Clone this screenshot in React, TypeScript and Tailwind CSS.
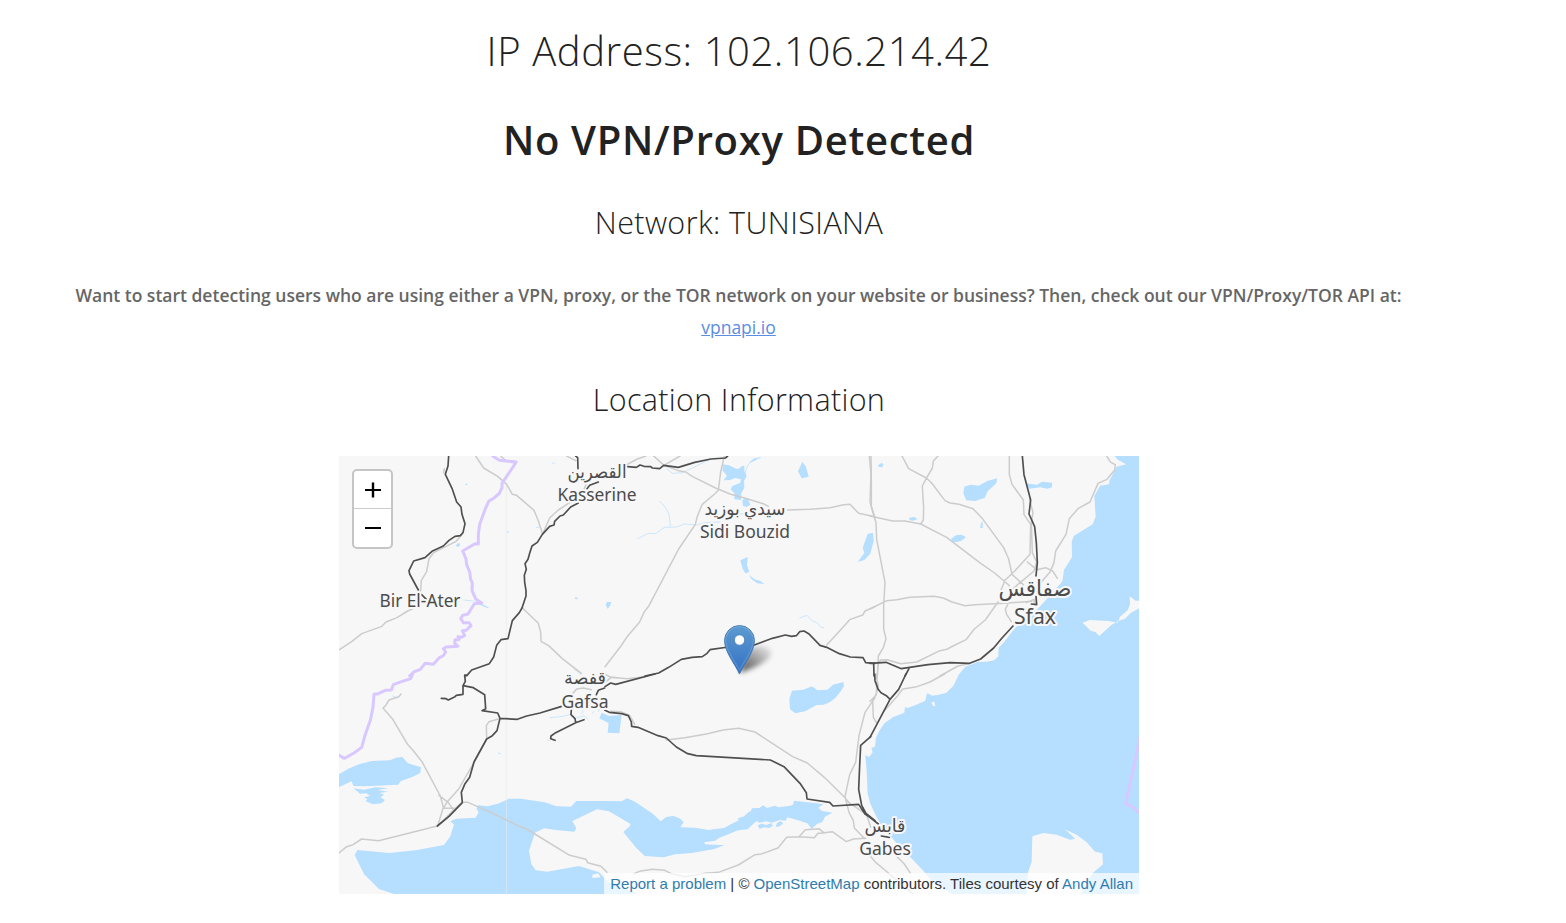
import React from "react";

// Map geometry is stored in six sections, at three units per pixel.
type Section = { x: number; y: number; water?: string; land?: string; streams?: string; roads: string; rails: string; border?: string };

const sections: Section[] = [
  {
    x: 0,
    y: 0,
    water: "M354 263l8-2 1 8-7 4-5-4zM379 83l6 1 0 3-6 0zM505 226l5 1-1 4-4-1zM708 424l8 1-1 5-7-1zM405 436l14 3 31 16-3 2-32-14z",
    streams: "M374 432l28 3M706 640l20 14M592 214l8 0M640 21l6 1",
    roads:
      "M410 0L434 36 476 61 503 85 520 115 533 118 585 163 597 192 611 234M611 234L632 186 658 162 692 140 735 100 748 70M485 0L500 14 528 16M316 38L314 50M0 582L39 556 68 533 127 512 141 498 174 485 206 465 222 458M243 425L247 373 263 347 270 308 284 290 350 257 366 239M550 455L566 471 598 502 605 528 606 556 629 569 670 608 727 652M683 0L710 14",
    rails:
      "M329 0L327 30 319 55 339 97 353 138 366 153 369 175 378 203 372 230 364 239 348 241 330 253 313 270 279 286 258 305 224 315 210 344 212 354 238 402M248 416L262 430 246 438M710 0L716 5 717 38M778 78L752 88 744 98M718 141L695 153 673 177 663 180 647 196 645 207 632 211 610 235 595 259 579 270 572 292 567 310 558 323 562 340 556 358 557 379 561 404 561 420 549 456 541 470 520 494 507 548 486 551 473 568 464 603 451 623 398 642 384 658 377 660",
    border:
      "M461 0L481 13 509 16 524 18 532 18 489 82 489 95 481 112 465 126 449 136 438 161 422 205 418 236 418 264 408 263 371 285 381 309 383 326 392 348 395 370 400 381 399 403 410 429 428 441 406 443 387 474 371 478 365 488 373 500 390 500 396 509 381 523 370 524 377 539 366 544 357 542 360 551 348 551 347 562 357 571 321 573 313 578 320 588 312 600 301 605 283 625 258 622 244 640 224 648 212 660",
  },
  {
    x: 798,
    y: 0,
    water:
      "M354 25L372 28 393 38 402 38 412 29 418 30 418 45 425 60 417 75 418 95 409 112 408 132 388 130 388 112 377 100 382 90 405 81 408 70 390 66 375 72 356 73 366 59 352 43ZM412 132l16-7 8 21-11 7-11-4ZM592 17L603 32 611 62 590 67 579 46ZM406 313L428 303 426 328 433 348 421 352 413 338ZM432 356L448 370 466 375 478 384 457 382 440 370ZM788 234L804 230 806 255 796 293 778 312 758 318 778 291 773 275ZM6 438l13 0-4 11-7 10-6-13ZM445 8l22-4-18 10-18 8z",
    streams:
      "M420 60L424 38 432 22 447 10 467 5M98 248L130 232 152 233 178 214 214 213 238 204 275 207 300 200 346 198M164 136L180 153 192 174 196 210M185 38L202 52 232 50 260 37 314 10M584 486L606 478 622 495 636 500 648 514 657 515M400 176l14-3",
    roads:
      "M67 25L97 9 123 0M146 0L177 28 220 44 242 48 263 62 332 96 375 114 426 128 475 143 490 151M177 28L225 0M358 0L347 48 340 103 329 114 291 146 276 184 271 205 221 279 132 449 118 467 104 498 65 544 48 570 0 632M548 162L616 160 676 155 716 146 735 145 761 172 810 182M793 0L798 53 795 138 810 186M810 452L780 465 773 477 734 491 701 528 665 567",
    rails:
      "M68 32L94 34 105 27 117 31 137 32 142 36 164 38 176 28 220 34 269 19 318 9 361 6 368 0M120 660L161 651 191 634 229 610 261 604 292 602 305 593 315 581 370 573 446 568 502 547 541 537 560 541 574 539 584 527 597 525 611 533 645 568 665 574 703 593 736 603 774 605 782 620 810 622",
  },
  {
    x: 1593,
    y: 0,
    water:
      "M734 0L743 11 768 25 740 32 719 72 717 85 690 89 673 120 677 182 668 205 640 222 612 239 605 257 606 303 593 325 582 341 577 376 553 404 525 435 500 462 470 487 435 516 403 557 386 575 385 601 372 613 350 617 323 618 285 633 266 656 250 690 228 711 188 719 171 712 166 734 139 746 113 756 105 753 103 770 70 783 44 801 28 824 18 845 15 872 4 876 8 889-2 903-14 898-10 944-7 1013 0 1041 18 1080 50 1134 65 1144 85 1169 120 1202 160 1244 180 1269 245 1314 810 1314 810 0ZM283 92L302 86 326 89 352 75 382 67 379 82 353 106 344 126 315 135 289 133 280 112ZM466 82L500 86 517 77 546 80 546 94 532 98 511 94 478 98ZM244 248L258 238 275 236 288 244 273 255 256 259 244 256ZM118 185l15-2 10 6-14 5-11-2ZM25 27l10-6 5 3-3 10-12-2ZM332 204l6-8 0 20-7 0ZM0 236l8-3 2 22-10 30Z",
    land: "M638 500L660 492 715 495 743 500 750 482 773 463 780 444 779 421 797 434 815 434 815 452 782 471 765 488 743 496 724 507 711 519 688 540 676 528 662 524ZM184 740l8-4 4 13-6 2ZM195 712l20-8 4 8-18 6ZM487 1141L520 1131 560 1136 600 1151 615 1149 605 1138 584 1120 620 1136 650 1159 675 1187 697 1192 699 1225 671 1249 650 1279 632 1314 470 1314 474 1249 485 1217Z",
    streams: "M3 232l-1 16",
    roads:
      "M3 0L4 80 4 153 18 200 20 250 45 379 41 449 41 520 48 548 40 575 25 600 22 660M96 0L116 38 169 66 185 81 225 134 240 141 267 145 309 158 335 185 401 275 416 309 426 355 460 386M204 0L190 15 187 36 169 67 157 90 161 155 160 192 152 204M0 180L68 195 105 195 152 204 230 244 332 322 374 351 418 389M418 0L418 56 426 85 460 132 462 176 482 205 480 295 434 345 405 373 393 402M479 130L489 170 484 200 487 290 500 318 492 345 430 397M472 318L500 341 527 335 548 345 562 367M710 0L722 19 736 26 734 42 711 70 684 82 660 138 625 157 598 188 588 235 557 285 552 320 540 348 514 378M0 459L50 434 80 431 120 424 192 421 220 426 246 438 285 449 314 446 403 442 485 436M384 438L346 492 313 519 288 551 243 573 231 580 210 584 140 618 92 623 52 611 31 612 25 625 22 660M413 446L406 460 410 475 424 497M296 623L264 630 210 660M470 440L492 430 494 445",
    rails:
      "M457 0L462 56 482 132 477 174 494 212 499 260 502 320 498 360M498 422L500 446 484 444M429 510L396 546 371 576 332 609 299 622 240 620 174 626 94 638 48 619 0 622M11 622L12 660M117 638L105 660",
  },
  {
    x: 0,
    y: 654,
    water:
      "M0 301L28 284 60 271 98 261 153 259 171 251 190 249 207 268 246 280 244 297 218 310 186 321 177 332 78 337 43 336 38 322 20 330 0 339ZM44 343l31 4 34-7 40 3-34 5 33 5-27 4 15 5-12 8 14 8-10 10-26 3-22-9 5-7-10-5 18-4-10-8-20 1z M418 394L445 397 477 389 510 374 545 374 617 385 652 397 696 398 712 381 810 381 848 382 864 373 888 383 942 420 965 442 982 429 1004 426 1024 434 1034 445 1024 460 1068 461 1110 468 1128 465 1155 462 1177 450 1200 439 1195 434 1218 424 1232 412 1240 403 1262 402 1272 394 1284 402 1308 395 1318 400 1350 396 1362 392 1365 380 1398 384 1453 390 1438 402 1450 411 1480 416 1458 428 1450 444 1434 450 1418 464 1405 448 1375 438 1345 430 1340 440 1322 438 1300 446 1280 442 1262 446 1252 442 1240 452 1226 466 1205 468 1192 470 1170 480 1140 492 1128 500 1096 505 1098 511 1156 514 1126 525 1059 537 1008 541 974 550 917 546 890 520 853 474 872 457 875 450 810 412 774 406 700 441 712 463 706 473 650 468 615 463 588 476 570 530 577 570 590 589 625 593 720 576 780 595 810 626 900 660 165 660 120 645 75 600 47 543 55 528 150 537 230 529 315 513 333 488 345 452 334 442 352 434 410 431 419 415 412 404ZM788 116l22 10 38-3-7 55-35-2 3-28-28-15ZM1256 454l12-5 14 4 14-6 6 9-12 6-16-2-12 5ZM1314 447l12-6 6 8-10 8-12 2Z",
    streams: "M633 131L673 127 695 120M706 134L735 125 747 135M160 66l12 3M478 237l7 2M625 198l6 1M728 118l4-8M778 112l3-6M760 118l5-6",
    roads:
      "M186 60L180 68 150 78 140 95 132 102 160 134 205 210 223 230 249 263 304 366 313 400 297 453M300 364L328 386 343 407M478 135L450 143 442 155 443 195 405 265 359 345 325 383 313 403 348 403M0 537L23 518 42 512 68 495 119 500 295 456 342 410 369 385 387 385 455 415 537 455 568 468 692 544 741 556 746 566 786 577 804 595M700 60L713 45 733 42 757 47M795 0L817 10 834 11",
    rails:
      "M384 4L377 3 379 22 372 35 372 61 352 64 348 68 328 78 321 74 307 73M372 35L403 41 437 62 440 104 429 110 476 117 483 133 535 136 563 126 603 117 668 97M483 133L474 170 460 185 443 195 405 264 392 310 377 331 367 355 370 386 330 427 295 456M772 62L778 49 797 42M697 106L696 122 708 134 710 145M735 137L710 146 650 176 636 186 635 194 648 199",
    border: "M221 0L215 14 181 25 163 32 157 48 139 49 118 59 105 61 102 100 94 139 77 187 68 220 45 237 16 253 0 244",
  },
  {
    x: 798,
    y: 654,
    water:
      "M553 75L561 50 595 47 621 37 637 49 668 47 684 32 715 24 717 37 706 53 690 73 674 85 656 92 635 93 600 112 571 118 555 106Z",
    land: "M402 424l14-5 4 7-12 4ZM425 407l12-3 2 7-12 3ZM-38 602l17-4 8 12-25 2Z",
    roads:
      "M0 25L19 10 67 14 120 8M17 112L47 113 74 124 89 151M183 198L240 191 308 179 354 168 401 163 450 174 563 248 607 267 658 310 718 369 732 386 785 422 797 460M810 71L780 115 762 185 752 265 734 302 720 368 732 415 745 440 748 462 779 494M85 600L103 592 142 586 179 589 199 599 240 608 300 598 340 595 400 573 450 542 469 540 519 522 545 490 582 488 601 467 642 464 656 476 682 473 724 503 745 495 782 493M582 488L628 491 639 478 660 477",
    rails:
      "M0 38L17 27 32 31 150 0M0 109L13 115 50 119 70 125 79 144 80 157 99 160 159 185 184 192 214 219 248 239 274 245 496 258 537 278 585 328 604 356 606 375 674 385 684 396 761 391 780 420 810 440M797 188L767 214 764 274 761 346 770 394 783 418 810 440",
  },
  {
    x: 1593,
    y: 654,
    roads: "M22 0L19 59 8 80 10 130 19 145M0 82L18 64 25 35 17 0M224 0L180 24 141 38 98 45 83 65 42 112M0 545L18 566 48 591 70 610 130 660M78 545L103 570 122 599",
    rails: "M14 0L15 20 24 45 33 56 49 65 60 76 0 190M108 0L86 46 60 76M0 430L25 450M34 486L58 490",
    border: "M810 190L798 248 767 389 792 402 810 418",
  },
];

const Layer = ({ pick, className }: { pick: (s: Section) => string | undefined; className: string }) => (
  <g className={className}>
    {sections.map((s, i) => {
      const d = pick(s);
      return d ? <path key={i} d={d} transform={`translate(${s.x} ${s.y})`} /> : null;
    })}
  </g>
);

type Place = { ar?: string; name: string; x: number; arY?: number; y: number; width: number; arWidth?: number; size: string };

const places: Place[] = [
  { ar: "القصرين", name: "Kasserine", x: 258, arY: 21.5, y: 45, width: 79, arWidth: 59, size: "text-[18px]" },
  { ar: "سيدي بوزيد", name: "Sidi Bouzid", x: 406, arY: 58.5, y: 82, width: 90, arWidth: 81, size: "text-[18px]" },
  { name: "Bir El-Ater", x: 81, y: 150.5, width: 81, size: "text-[18px]" },
  { ar: "قفصة", name: "Gafsa", x: 246, arY: 228, y: 251.5, width: 47, arWidth: 42, size: "text-[18px]" },
  { ar: "صفاقس", name: "Sfax", x: 696, arY: 140, y: 168, width: 42, arWidth: 73, size: "text-[22px]" },
  { ar: "قابس", name: "Gabes", x: 546, arY: 375.5, y: 398.5, width: 51.5, arWidth: 41, size: "text-[18px]" },
];

function MapCanvas() {
  return (
    <svg className="block h-[438px] w-[800px]" viewBox="0 0 800 438">
      <defs>
        <linearGradient id="pin" x1="0" y1="0" x2="0" y2="1">
          <stop offset="0" stopColor="#5c9bd0" />
          <stop offset="1" stopColor="#3470c4" />
        </linearGradient>
        <filter id="shade" x="-40%" y="-40%" width="180%" height="180%">
          <feGaussianBlur stdDeviation="2.8" />
        </filter>
        <linearGradient id="shadow" x1="0" y1="1" x2="1" y2="0">
          <stop offset="0" stopColor="#000" stopOpacity=".7" />
          <stop offset="1" stopColor="#000" stopOpacity=".02" />
        </linearGradient>
      </defs>
      <rect width="800" height="438" fill="#f7f7f7" />
      <g transform="scale(.333333)" strokeLinecap="round" strokeLinejoin="round">
        <Layer pick={(s) => s.water} className="fill-[#b5deff]" />
        <Layer pick={(s) => s.land} className="fill-[#f7f7f7]" />
        <Layer pick={(s) => s.streams} className="fill-none stroke-[#b5deff] stroke-2" />
        <path d="M502 85V1314" className="fill-none stroke-[#eaebec] stroke-2" />
        <Layer pick={(s) => s.roads} className="fill-none stroke-[#cccccc] stroke-[4.5px]" />
        <Layer pick={(s) => s.border} className="fill-none stroke-[#d9c8ff] stroke-[9px]" />
        <Layer pick={(s) => s.rails} className="fill-none stroke-[#4f4f4f] stroke-[5px]" />
      </g>
      {places.map((p) => (
        <g
          key={p.name}
          textAnchor="middle"
          paintOrder="stroke"
          className={`fill-[#4c4c4c] stroke-[#f7f7f7] stroke-[4px] font-['Noto_Sans','DejaVu_Sans',sans-serif] ${p.size}`}
          strokeLinejoin="round"
        >
          {p.ar && (
            <text x={p.x} y={p.arY} textLength={p.arWidth} lengthAdjust="spacingAndGlyphs">
              {p.ar}
            </text>
          )}
          <text x={p.x} y={p.y} textLength={p.width} lengthAdjust="spacingAndGlyphs">
            {p.name}
          </text>
        </g>
      ))}
      <path d="M401 217C404 208 405 199 412 193C422 187 435 191 432 199C427 208 411 213 401 217Z" fill="url(#shadow)" filter="url(#shade)" />
      <path d="M400.5 218C396 208 385.500 196 385.500 184.500a15 15 0 0 1 30 0C415.500 196 405 208 400.500 218Z" fill="url(#pin)" stroke="#3a74ae" strokeWidth=".8" />
      <path d="M400.5 214C396 205 386.700 195 386.700 184.500a13.800 13.800 0 0 1 27.600 0C414.300 195 405 205 400.500 214Z" fill="none" stroke="#fff" strokeOpacity=".14" strokeWidth="1.2" />
      <circle cx="400.500" cy="184" r="5.200" fill="#fff" stroke="#3d7ab8" strokeWidth=".8" />
    </svg>
  );
}

export default function App() {
  return (
    <main className="h-[923px] w-[1566px] overflow-hidden bg-white font-['Open_Sans',sans-serif]">
      <div className="flex w-[1478px] flex-col items-center text-center whitespace-nowrap text-[#222]">
        <h1 className="mt-[21px] h-[60px] text-[40px] leading-[60px] font-light tracking-[0.57px]">IP Address: 102.106.214.42</h1>
        <h2 className="mt-[29px] h-[60px] text-[40px] leading-[60px] font-semibold tracking-[0.7px]">No VPN/Proxy Detected</h2>
        <h3 className="mt-[30px] h-[45px] text-[30.5px] leading-[45px] font-light tracking-[0.4px]">Network: TUNISIANA</h3>
        <p className="mt-[34px] -ml-px text-[17.5px] leading-8 font-semibold text-[#666]">
          Want to start detecting users who are using either a VPN, proxy, or the TOR network on your website or business? Then, check out our VPN/Proxy/TOR API at:
          <br />
          <a className="font-normal text-[#5b8de0] underline">vpnapi.io</a>
        </p>
        <h3 className="mt-[34px] h-[45px] text-[30.5px] leading-[45px] font-light tracking-[0.33px]">Location Information</h3>
        <div className="relative mt-[34px] h-[438px] w-[800px] overflow-hidden">
          <MapCanvas />
          <div className="absolute top-[13px] left-[13px] flex h-[80px] w-[41px] flex-col overflow-hidden rounded-[5px] border-2 border-[#c5c5c5] bg-white text-black">
            <button aria-label="Zoom in" className="flex h-[38px] items-center justify-center border-b border-[#ccc]">
              <svg className="size-4" viewBox="0 0 16 16"><path d="M0 8H16" stroke="currentColor" strokeWidth="2" /><path d="M8 .5V15.500" stroke="currentColor" strokeWidth="2.4" /></svg>
            </button>
            <button aria-label="Zoom out" className="flex h-[38px] items-center justify-center">
              <svg className="size-4" viewBox="0 0 16 16"><path d="M0 8H16" stroke="currentColor" strokeWidth="2" /></svg>
            </button>
          </div>
          <div className="absolute right-0 bottom-0 h-[21px] bg-white/70 px-[6px] font-['Liberation_Sans',sans-serif] text-[15px] leading-[21px] text-[#333]">
            <a className="text-[#2f7cb0]">Report a problem</a> | © <a className="text-[#2f7cb0]">OpenStreetMap</a> contributors. Tiles courtesy of <a className="text-[#2f7cb0]">Andy Allan</a>
          </div>
        </div>
      </div>
    </main>
  );
}
